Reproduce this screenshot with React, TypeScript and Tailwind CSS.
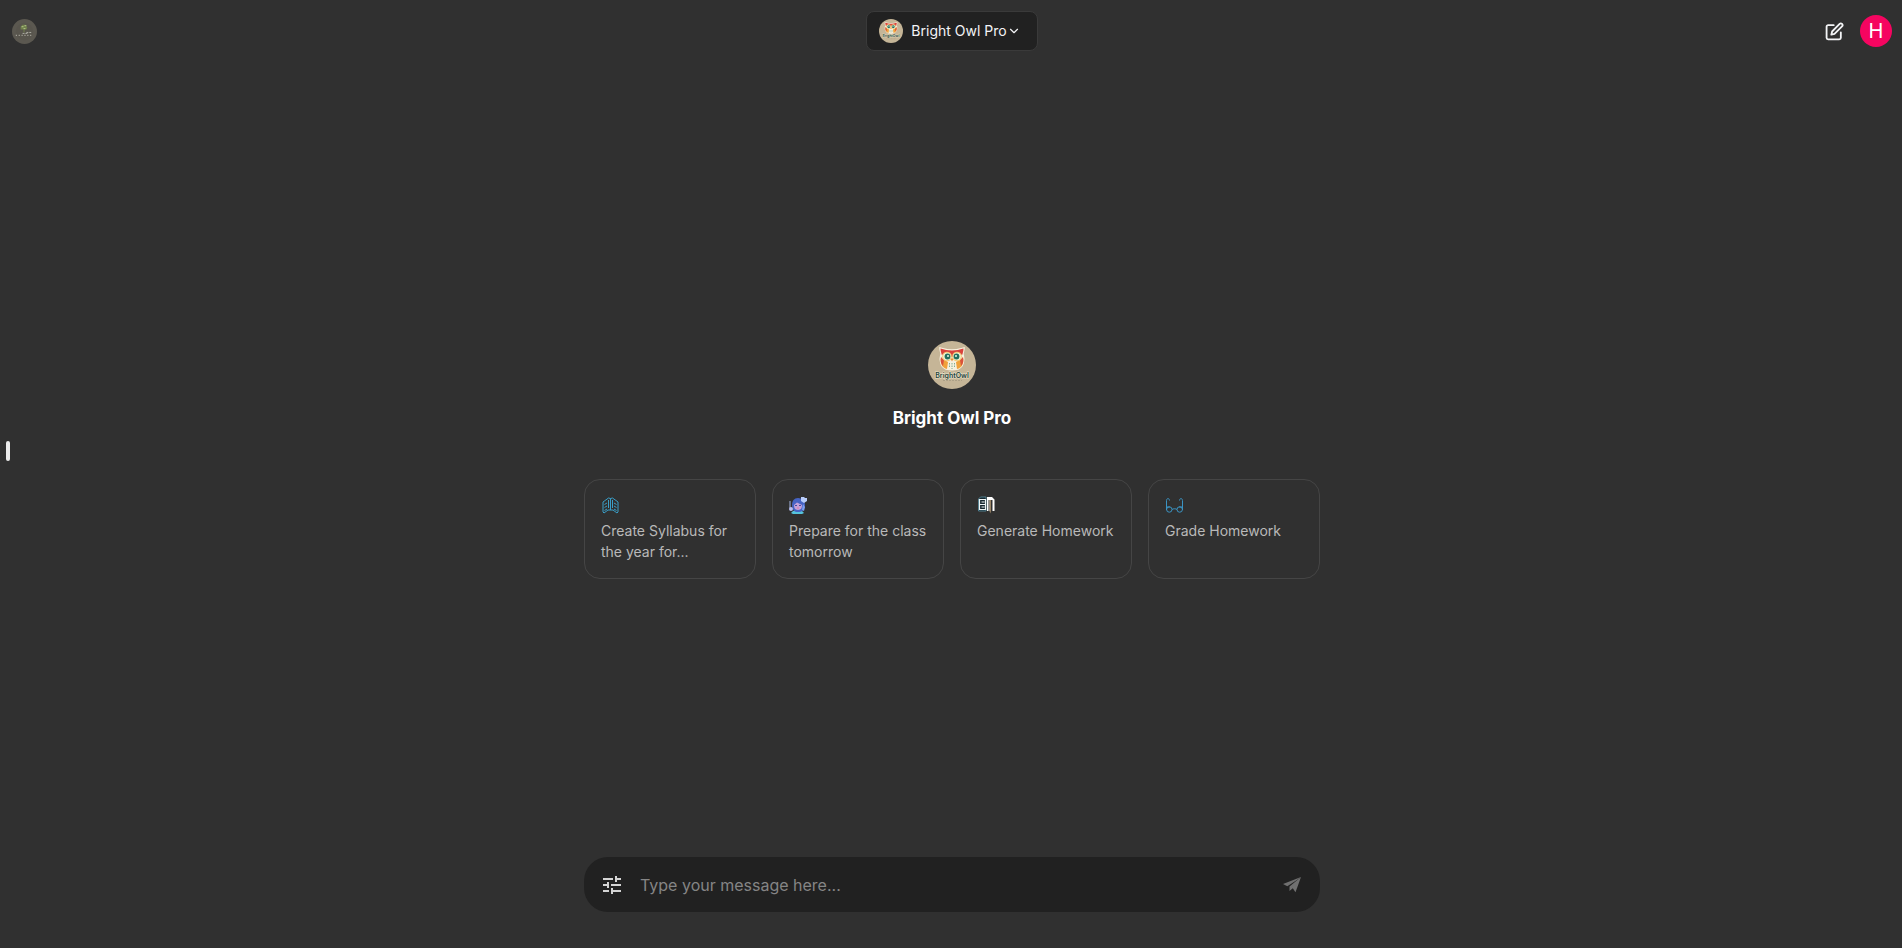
import { ReactNode } from 'react';
import { FiChevronDown, FiEdit } from 'react-icons/fi';
import { MdTune } from 'react-icons/md';

type IconProps = {
  className?: string
}

type SuggestionType = {
  title: string
  icon: ReactNode
}

const OwlLogo = ({ className }: IconProps) => (
  <svg viewBox="0 0 48 48" className={className} aria-hidden="true">
    <circle cx="24" cy="24" r="24" fill="#c5b597" />
    <path d="M12 7c4 1 7 2 12 2s8-1 12-2c0 3-1 4-1 6 2 7 0 13-5 15-4 1-8 1-12 0-5-2-7-8-5-15 0-2-1-3-1-6z" fill="#f7f0de" stroke="#f7f0de" strokeWidth="1.500" />
    <path d="M12.500 7.500c4 1 7 2 11.500 2s7.500-1 11.500-2c0 3-1 4-1 6L24 16l-10.500-2.500c0-2-1-3-1-6z" fill="#d9423c" />
    <path d="M13 17c-1 5 1 10 6 11l1-7zM35 17c1 5-1 10-6 11l-1-7z" fill="#f0a13a" />
    <path d="M13 16c-1 4 0 7 2 9l1-6zM35 16c1 4 0 7-2 9l-1-6z" fill="#d9523c" />
    <circle cx="19" cy="15.500" r="4.800" fill="#f3c873" />
    <circle cx="29" cy="15.500" r="4.800" fill="#f3c873" />
    <circle cx="19" cy="15.500" r="3.800" fill="#f1f3d8" />
    <circle cx="29" cy="15.500" r="3.800" fill="#f1f3d8" />
    <circle cx="19.500" cy="15.500" r="2.900" fill="#22705d" />
    <circle cx="28.500" cy="15.500" r="2.900" fill="#22705d" />
    <circle cx="20" cy="15" r="1" fill="#e9f5e6" />
    <circle cx="28" cy="15" r="1" fill="#e9f5e6" />
    <path d="M22.500 17.500h3L24 20.500z" fill="#e8862e" />
    <path d="M21.500 22v5M24 22v6M26.500 22v5" stroke="#7fae94" strokeWidth="1" strokeDasharray="1.500 1" />
    <text
      x="24"
      y="36.500"
      textAnchor="middle"
      fontFamily="Inter, sans-serif"
      fontSize="7"
      fontWeight="600"
      fill="#24443b"
      stroke="#ece3cc"
      strokeWidth="1"
      paintOrder="stroke"
    >
      BrightOwl
    </text>
    <path d="M15 39.500h19" stroke="#a2977e" strokeWidth="0.700" strokeDasharray="2 1" />
  </svg>
)

const WorkspaceLogo = ({ className }: IconProps) => (
  <svg viewBox="0 0 26 26" className={className} aria-hidden="true">
    <circle cx="13" cy="13" r="13" fill="#5b5850" />
    <circle cx="13" cy="13" r="9" fill="#58554d" />
    <path d="M9 8l2-2 3 0 2 3-1 2-2 0v3h-1v-3L9 11z" fill="#70804b" />
    <path d="M10 8h2M13 7h2M12 10h2" stroke="#b4c78a" strokeWidth="1" />
    <path d="M4 17h18" stroke="#b5b3a9" strokeWidth="1.500" strokeDasharray="1 2" />
    <path d="M11 15h5M15 14h6" stroke="#c6c5bc" strokeWidth="0.800" strokeDasharray="2 1" />
  </svg>
)

const SyllabusIcon = ({ className }: IconProps) => (
  <svg viewBox="0 0 18 18" className={className} fill="none" stroke="#3a9fc8" strokeWidth="1" strokeLinejoin="round" aria-hidden="true">
    <path d="M9.500 2.500L7.500 2 2 6v10l1 1 4-3h5l4 3 1-1V6l-5.500-4z" />
    <path d="M9.500 2.500V14M7.500 4v8M11.500 4v8" />
    <path d="M3.500 8.500L6 7M3.500 11.500L6 10M3.500 14.500L6 13M13 7l2.500 1.500M13 10l2.500 1.500M13 13l2.500 1.500" />
  </svg>
)

const TeacherIcon = ({ className }: IconProps) => (
  <svg viewBox="0 0 18 18" className={className} aria-hidden="true">
    <path d="M4 15h9l2 2-2 1H4l-2-1z" fill="#55c3dc" />
    <path d="M3 9c0-4 2-7 6-7s7 3 7 7-3 7-6 7H7c-3-1-4-4-4-7z" fill="#4664c4" />
    <path d="M5 9l3-2.500L13 9c0 3-1 5-4 5s-4-2-4-5z" fill="#c3a2d9" />
    <path d="M6 9.500h2M10 9.500h2" stroke="#454ba3" strokeWidth="1" />
    <path d="M8 12h2" stroke="#e676a2" strokeWidth="1" />
    <path d="M12 1h3l1 1 2 0v3l-3 2-3-2z" fill="#b8cdfa" />
    <path d="M1 5v7" stroke="#a2b4df" strokeWidth="1" />
    <circle cx="2" cy="13" r="2" fill="#b9bdf0" />
    <path d="M14 8l2 3-1 4-2-1z" fill="#7d9ff0" />
  </svg>
)

const HomeworkIcon = ({ className }: IconProps) => (
  <svg viewBox="0 0 18 18" className={className} aria-hidden="true">
    <path d="M1.500 3l2-2H9v14H1.500z" fill="#17272f" stroke="#5f9db3" strokeWidth="0.700" />
    <path d="M2 3.500h7M2 8.500h7M2 13.500h7M2.500 3v11M8.500 3v11M4.500 11h3M4.500 6h3" stroke="#eef4f5" strokeWidth="1.200" />
    <path d="M10 1h5l2.500 2.500V15H15.500V4H14v11h-1.500V4h-1v11H10z" fill="#fff" />
    <path d="M12.500 4H14v11l-0.700 2.500-0.800-2.500z" fill="#9a8566" />
  </svg>
)

const GlassesIcon = ({ className }: IconProps) => (
  <svg viewBox="0 0 18 18" className={className} fill="none" stroke="#3b93c2" strokeWidth="1" aria-hidden="true">
    <path d="M4.500 4.500C4.500 2 1.500 2 1.500 4.500V14M14.500 4.500c0-2.500 3-2.500 3 0V14" />
    <circle cx="4.300" cy="13.500" r="2.700" />
    <circle cx="14.700" cy="13.500" r="2.700" />
    <path d="M7 13.500c1-1 4-1 5 0M1.500 11H5M14 11h3.500" />
  </svg>
)

const SendIcon = ({ className }: IconProps) => (
  <svg viewBox="0 0 18 16" className={className} fill="currentColor" aria-hidden="true">
    <path d="M18 0L0 7l4.300 2.300L14 3z" />
    <path d="M18 0L6.500 9.500v4.500l3.300-2.700 2.700 4z" />
  </svg>
)

const suggestions: SuggestionType[] = [
  { title: 'Create Syllabus for the year for...', icon: <SyllabusIcon className="size-[18px]" /> },
  { title: 'Prepare for the class tomorrow', icon: <TeacherIcon className="size-[18px]" /> },
  { title: 'Generate Homework', icon: <HomeworkIcon className="size-[18px]" /> },
  { title: 'Grade Homework', icon: <GlassesIcon className="size-[18px]" /> },
];

const Header = () => (
  <header className="grid h-[62px] grid-cols-3 items-center px-[10px]">
    <a href="#" aria-label="Home" className="w-fit">
      <WorkspaceLogo className="size-[25px]" />
    </a>
    <button
      type="button"
      className="flex h-10 items-center justify-self-center rounded-lg border border-[#3a3a3a] bg-[#212121] px-3 text-sm text-gray-100"
    >
      <OwlLogo className="mr-2 size-6" />
      Bright Owl Pro
      <FiChevronDown className="mr-1 size-[14px]" />
    </button>
    <div className="flex items-center justify-end gap-4">
      <button type="button" aria-label="New chat" className="text-gray-100">
        <FiEdit className="size-[19px]" strokeWidth={2.3} />
      </button>
      <button type="button" className="size-8 rounded-full bg-[#f50560] text-xl text-white">
        H
      </button>
    </div>
  </header>
)

const SuggestionCard = ({ title, icon }: SuggestionType) => (
  <button
    type="button"
    className="flex h-[100px] flex-col items-start gap-[6px] rounded-2xl border border-[#454545] px-4 pt-4 text-left text-sm leading-[21px] text-[#b9b9b9]"
  >
    {icon}
    <span>{title}</span>
  </button>
)

const MessageForm = () => (
  <form
    className="mx-auto flex h-[55px] w-full max-w-[736px] items-center rounded-3xl bg-[#212121] pr-[19px] pl-4"
    onSubmit={(e) => e.preventDefault()}
  >
    <button type="button" aria-label="Chat settings" className="mr-4 text-[#d4d4d4]">
      <MdTune className="size-6" />
    </button>
    <input
      type="text"
      aria-label="Message"
      placeholder="Type your message here..."
      className="min-w-0 flex-1 bg-transparent text-base text-gray-100 outline-none placeholder:text-[#858585]"
    />
    <button type="submit" aria-label="Send message" className="text-[#707070]">
      <SendIcon className="h-4 w-[18px]" />
    </button>
  </form>
)

const App = () => {
  return (
    <div className="relative flex min-h-screen flex-col bg-[#303030] pl-[2px] font-[Inter,sans-serif]">
      <Header />
      <main className="flex flex-1 flex-col px-4 pb-9">
        <section className="mx-auto flex w-full max-w-[736px] flex-1 flex-col items-center justify-center">
          <OwlLogo className="size-12" />
          <h1 className="mt-[15px] text-[17px] leading-7 font-bold text-white">Bright Owl Pro</h1>
          <div className="mt-[47px] grid w-full grid-cols-2 gap-4 sm:grid-cols-4">
            {suggestions.map((item) => (
              <SuggestionCard key={item.title} title={item.title} icon={item.icon} />
            ))}
          </div>
        </section>
        <MessageForm />
      </main>
      {/* handle that opens the sidebar */}
      <button
        type="button"
        aria-label="Open sidebar"
        className="absolute top-[441px] left-[6px] h-5 w-1 rounded-xs bg-[#ececec]"
      />
    </div>
  )
}

export default App;
